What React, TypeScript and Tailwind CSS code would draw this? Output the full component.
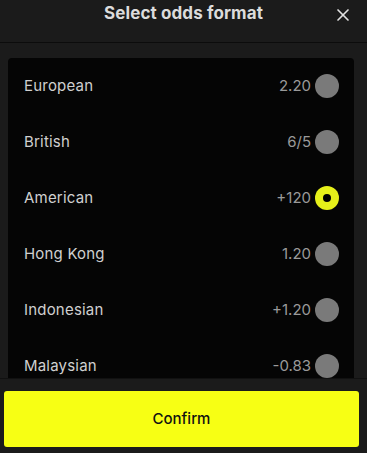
import { X } from 'lucide-react'

const FORMATS = [
  { name: 'European', value: '2.20' },
  { name: 'British', value: '6/5' },
  { name: 'American', value: '+120', selected: true },
  { name: 'Hong Kong', value: '1.20' },
  { name: 'Indonesian', value: '+1.20' },
  { name: 'Malaysian', value: '-0.83' },
]

export default function App() {
  return (
    <div
      className="w-[367px] h-[453px] bg-[#1b1b1b] flex flex-col overflow-hidden"
      style={{ fontFamily: 'Inter, "Noto Sans", sans-serif' }}
    >
      {/* Header */}
      <div className="h-[43px] shrink-0 flex items-center justify-center relative border-b border-[#0c0c0c]">
        <h2 className="text-[17px] font-bold text-[#dcdcdc] -mt-[15px] tracking-[0.1px]">Select odds format</h2>
        <button className="absolute right-[14px] top-[5px] text-[#e0e0e0]">
          <X size={20} strokeWidth={2} />
        </button>
      </div>

      {/* List */}
      <div className="flex-1 overflow-hidden pt-[15px] pl-[8px] pr-[13px]">
        <div className="bg-[#050505] rounded-[4px]">
          {FORMATS.map(f => (
            <div key={f.name} className="h-[56px] flex items-center pl-[16px] pr-[15px]">
              <span className="flex-1 text-[15px] text-[#d0d0d0] tracking-[0.2px]">{f.name}</span>
              <span className="text-[15px] text-[#9a9a9a] mr-[4px]">{f.value}</span>
              {f.selected ? (
                <span className="w-[24px] h-[24px] rounded-full bg-[#e6f01a] flex items-center justify-center">
                  <span className="w-[8px] h-[8px] rounded-full bg-black" />
                </span>
              ) : (
                <span className="w-[24px] h-[24px] rounded-full bg-[#7a7a7a]" />
              )}
            </div>
          ))}
        </div>
      </div>

      {/* Footer */}
      <div className="h-[75px] shrink-0 bg-[#1b1b1b] border-t border-[#111] pt-[12px] pl-[4px] pr-[8px]">
        <button className="w-full h-[56px] rounded-[3px] bg-[#f7ff14] text-[15px] font-medium text-[#111]">
          Confirm
        </button>
      </div>
    </div>
  )
}
